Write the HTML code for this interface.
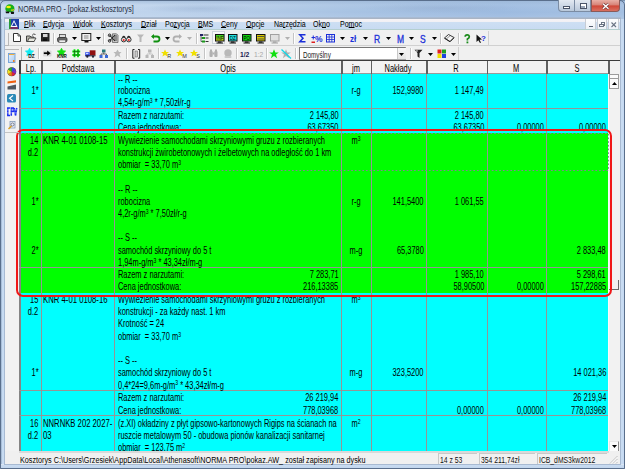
<!DOCTYPE html>
<html><head><meta charset="utf-8">
<style>
html,body{margin:0;padding:0;}
body{width:625px;height:469px;overflow:hidden;position:relative;background:#f0f0f0;font-family:"Liberation Sans", sans-serif;}
.t{position:absolute;white-space:nowrap;line-height:normal;}
div{box-sizing:border-box;}
svg{position:absolute;overflow:visible;}
sup{font-size:0.68em;vertical-align:0;position:relative;top:-0.45em;line-height:0;}
u{text-decoration:underline;text-underline-offset:0.3px;text-decoration-thickness:0.8px;}
</style></head><body>
<div style="position:absolute;left:0px;top:0px;width:625px;height:19px;background:linear-gradient(90deg,#c6d8ee 0px,#bed3ec 150px,#a8c3e3 350px,#9dbbe0 500px,#a4c0e2 625px);"></div>
<div style="position:absolute;left:0px;top:0px;width:625px;height:19px;background:linear-gradient(#5f7795 0px,rgba(160,185,215,0.6) 1.2px,rgba(255,255,255,0.08) 5px,rgba(255,255,255,0) 12px,rgba(255,255,255,0.1) 19px);"></div>
<div style="position:absolute;left:140px;top:4px;width:120px;height:9px;background:radial-gradient(ellipse at center,rgba(140,165,200,0.35),rgba(140,165,200,0) 70%);"></div>
<div style="position:absolute;left:360px;top:3px;width:160px;height:10px;background:radial-gradient(ellipse at center,rgba(140,165,200,0.35),rgba(140,165,200,0) 70%);"></div>
<div style="position:absolute;left:0px;top:19px;width:5px;height:450px;background:linear-gradient(90deg,#6d7f98 0px,#8fa4bf 1.2px,#c4d9f1 1.8px,#c9dcf2 4px,#e8eef5 4.5px);"></div>
<div style="position:absolute;left:620px;top:19px;width:5px;height:450px;background:linear-gradient(90deg,#7f8894 0px,#a8b4c4 1px,#c9dcf2 1.5px,#c6daf2 3.5px,#66707c 4.5px);"></div>
<div style="position:absolute;left:0px;top:464px;width:625px;height:5px;background:linear-gradient(#e8eef5 0px,#c9dcf2 1px,#c2d6ee 4px,#6d7f98 5px);"></div>
<div style="position:absolute;left:0px;top:0px;width:625px;height:469px;border:1px solid #5a6f8c;border-radius:5px 5px 0 0;"></div>
<div style="position:absolute;left:4px;top:17px;width:617px;height:448px;background:#f2f2f2;border:1px solid #a8bad2;"></div>
<svg style="left:5px;top:3.8px" width="10" height="10" viewBox="0 0 10 10"><path d="M0.3 4.5Q0.5 1.5 3 0.6Q5.5 -0.2 7.5 1Q9.8 2.3 9.5 5.5Q9 8 6.5 8H3Q0.3 7.5 0.3 4.5Z" fill="#18b018"/><ellipse cx="3.6" cy="3" rx="2.4" ry="1.3" fill="#f8f010"/><path d="M6 6Q8 6.5 9.3 5.5" stroke="#e0d020" stroke-width="1.1" fill="none"/><path d="M0.5 7.5H4.5L4 9.3H1Z" fill="#111"/><path d="M5.5 7.8H9.2L8.8 9.9H6.2Z" fill="#111"/></svg>
<div class="t" style="left:18.30px;top:4.06px;font-size:9px;color:#1e2b3c;transform:scaleX(0.79);transform-origin:0 0;">NORMA PRO - [pokaz.kst:kosztorys]</div>
<div style="position:absolute;left:558.4px;top:0px;width:17px;height:11.5px;background:linear-gradient(#e3e9f1,#cdd8e6 50%,#b9c8da);border:1px solid #7b8ca3;border-top:none;border-radius:0 0 0 4px;"></div>
<div style="position:absolute;left:563.3px;top:6.2px;width:7.2px;height:2.6px;background:#fff;border:0.8px solid #4a5468;"></div>
<div style="position:absolute;left:575.2px;top:0px;width:16.2px;height:11.5px;background:linear-gradient(#e3e9f1,#cdd8e6 50%,#b9c8da);border:1px solid #7b8ca3;border-top:none;border-left:none;"></div>
<div style="position:absolute;left:579.8px;top:3.4px;width:7px;height:5.8px;border:1px solid #4a5468;background:#fff;"></div>
<div style="position:absolute;left:581.3px;top:5.5px;width:4px;height:2.2px;background:#9aa6b8;"></div>
<div style="position:absolute;left:591.4px;top:0px;width:29px;height:11.5px;background:linear-gradient(#e8b0a6,#d8867a 42%,#d04838 55%,#d87060);border:1px solid #8a5a58;border-top:none;border-radius:0 0 4px 0;"></div>
<svg style="left:602.3px;top:2.8px" width="7.5" height="6.5" viewBox="0 0 7.5 6.5"><path d="M1 0.8L6.5 5.7M6.5 0.8L1 5.7" stroke="#6a3030" stroke-width="2.6"/><path d="M1 0.8L6.5 5.7M6.5 0.8L1 5.7" stroke="#fff" stroke-width="1.5"/></svg>
<div style="position:absolute;left:4px;top:17.5px;width:617px;height:1.5px;background:#a9b4c4;"></div>
<div style="position:absolute;left:5px;top:19px;width:615px;height:10px;background:linear-gradient(#f6f3f6 0px,#f0f0f5 3px,#cddff3 3.5px,#c8dbf2 10px);"></div>
<div style="position:absolute;left:5px;top:28.8px;width:615px;height:1.4px;background:#a9cccb;"></div>
<svg style="left:9px;top:19px" width="10" height="10" viewBox="0 0 10 10"><rect width="10" height="10" fill="#1c3fa8"/><rect x="0" y="0" width="2" height="10" fill="#2a9a3a"/><path d="M5 1 L8.5 8 H1.5Z" fill="#fff"/><path d="M5 3 L7 7 H3Z" fill="#1c3fa8"/><rect x="1" y="8.5" width="8" height="1" fill="#d02020"/></svg>
<div class="t" style="left:23.60px;top:19.22px;font-size:8.6px;color:#000;transform:scaleX(0.82);transform-origin:0 0;"><u>P</u>lik</div>
<div class="t" style="left:43.40px;top:19.22px;font-size:8.6px;color:#000;transform:scaleX(0.82);transform-origin:0 0;"><u>E</u>dycja</div>
<div class="t" style="left:72.50px;top:19.22px;font-size:8.6px;color:#000;transform:scaleX(0.82);transform-origin:0 0;"><u>W</u>idok</div>
<div class="t" style="left:101.00px;top:19.22px;font-size:8.6px;color:#000;transform:scaleX(0.82);transform-origin:0 0;"><u>K</u>osztorys</div>
<div class="t" style="left:141.00px;top:19.22px;font-size:8.6px;color:#000;transform:scaleX(0.82);transform-origin:0 0;"><u>D</u>ział</div>
<div class="t" style="left:165.00px;top:19.22px;font-size:8.6px;color:#000;transform:scaleX(0.82);transform-origin:0 0;">Po<u>z</u>ycja</div>
<div class="t" style="left:198.00px;top:19.22px;font-size:8.6px;color:#000;transform:scaleX(0.82);transform-origin:0 0;"><u>B</u>MS</div>
<div class="t" style="left:221.00px;top:19.22px;font-size:8.6px;color:#000;transform:scaleX(0.82);transform-origin:0 0;"><u>C</u>eny</div>
<div class="t" style="left:246.00px;top:19.22px;font-size:8.6px;color:#000;transform:scaleX(0.82);transform-origin:0 0;"><u>O</u>pcje</div>
<div class="t" style="left:274.00px;top:19.22px;font-size:8.6px;color:#000;transform:scaleX(0.82);transform-origin:0 0;">Na<u>r</u>zędzia</div>
<div class="t" style="left:312.80px;top:19.22px;font-size:8.6px;color:#000;transform:scaleX(0.82);transform-origin:0 0;">Ok<u>n</u>o</div>
<div class="t" style="left:339.70px;top:19.22px;font-size:8.6px;color:#000;transform:scaleX(0.82);transform-origin:0 0;">Po<u>m</u>oc</div>
<div style="position:absolute;left:585.4px;top:19.3px;width:10.6px;height:10px;background:linear-gradient(#fdfdfe,#eef2f8);border-left:1px solid #c8ccd4;border-right:1px solid #c8ccd4;"></div>
<div style="position:absolute;left:596.8px;top:19.3px;width:10.6px;height:10px;background:linear-gradient(#fdfdfe,#eef2f8);border-left:1px solid #c8ccd4;border-right:1px solid #c8ccd4;"></div>
<div style="position:absolute;left:608.3px;top:19.3px;width:10.5px;height:10px;background:linear-gradient(#fdfdfe,#eef2f8);border-left:1px solid #c8ccd4;border-right:1px solid #c8ccd4;"></div>
<div style="position:absolute;left:588.8px;top:26.2px;width:4px;height:1px;background:#556070;"></div>
<div style="position:absolute;left:600.5px;top:22.3px;width:4.5px;height:3.5px;border:1px solid #6a7484;border-top-width:1.5px;"></div>
<div style="position:absolute;left:599.2px;top:23.8px;width:4.5px;height:3.5px;border:1px solid #6a7484;border-top-width:1.5px;background:#f4f6fa;"></div>
<svg style="left:610.8px;top:21.8px" width="5.5" height="5.5" viewBox="0 0 5.5 5.5"><path d="M0.5 0.5L5 5M5 0.5L0.5 5" stroke="#6a7484" stroke-width="1.1"/></svg>
<div style="position:absolute;left:5px;top:30px;width:615px;height:15px;background:#f0f0f0;"></div>
<div style="position:absolute;left:5px;top:45px;width:615px;height:1px;background:#d0d0d0;"></div>
<div style="position:absolute;left:5px;top:46px;width:615px;height:14px;background:#f0f0f0;"></div>
<div style="position:absolute;left:19px;top:74px;width:589px;height:59px;background:#00ffff;"></div>
<div style="position:absolute;left:19px;top:133px;width:589px;height:159.5px;background:#00ff00;"></div>
<div style="position:absolute;left:19px;top:292.5px;width:589px;height:158.5px;background:#00ffff;"></div>
<div style="position:absolute;left:19px;top:60px;width:601px;height:14px;background:#f2f2f2;"></div>
<div style="position:absolute;left:19px;top:60px;width:601px;height:1.3px;background:#3c3c3c;"></div>
<div style="position:absolute;left:19px;top:73px;width:589px;height:1px;background:#9a9a9a;"></div>
<div style="position:absolute;left:41px;top:61px;width:1.5px;height:12.5px;background:#606060;"></div>
<div style="position:absolute;left:114px;top:61px;width:1.5px;height:12.5px;background:#606060;"></div>
<div style="position:absolute;left:341px;top:61px;width:1.5px;height:12.5px;background:#606060;"></div>
<div style="position:absolute;left:370.5px;top:61px;width:1.5px;height:12.5px;background:#606060;"></div>
<div style="position:absolute;left:426px;top:61px;width:1.5px;height:12.5px;background:#606060;"></div>
<div style="position:absolute;left:486.5px;top:61px;width:1.5px;height:12.5px;background:#606060;"></div>
<div style="position:absolute;left:546px;top:61px;width:1.5px;height:12.5px;background:#606060;"></div>
<div style="position:absolute;left:608px;top:61px;width:1.5px;height:12.5px;background:#606060;"></div>
<div style="position:absolute;left:19px;top:60px;width:1.5px;height:14px;background:#3c3c3c;"></div>
<div style="position:absolute;left:19px;top:74px;width:2px;height:377px;background:#858585;"></div>
<div style="position:absolute;left:41px;top:74px;width:1px;height:377px;background:#959595;"></div>
<div style="position:absolute;left:114px;top:74px;width:1px;height:377px;background:#959595;"></div>
<div style="position:absolute;left:341px;top:74px;width:1px;height:377px;background:#959595;"></div>
<div style="position:absolute;left:370.5px;top:74px;width:1px;height:377px;background:#959595;"></div>
<div style="position:absolute;left:426px;top:74px;width:1px;height:377px;background:#959595;"></div>
<div style="position:absolute;left:486.5px;top:74px;width:1px;height:377px;background:#959595;"></div>
<div style="position:absolute;left:546px;top:74px;width:1px;height:377px;background:#959595;"></div>
<div style="position:absolute;left:608px;top:74px;width:1.2px;height:377px;background:#fafafa;"></div>
<div style="position:absolute;left:19px;top:108px;width:589px;height:1px;background:#959595;"></div>
<div style="position:absolute;left:19px;top:267px;width:589px;height:1px;background:#959595;"></div>
<div style="position:absolute;left:19px;top:390px;width:589px;height:1px;background:#959595;"></div>
<div style="position:absolute;left:19px;top:415px;width:589px;height:1px;background:#959595;"></div>
<div class="t" style="left:-69.00px;width:200px;text-align:center;top:63.37px;font-size:10.2px;color:#000;transform:scaleX(0.73);transform-origin:50% 0;">Lp.</div>
<div class="t" style="left:-22.20px;width:200px;text-align:center;top:63.37px;font-size:10.2px;color:#000;transform:scaleX(0.73);transform-origin:50% 0;">Podstawa</div>
<div class="t" style="left:127.80px;width:200px;text-align:center;top:63.37px;font-size:10.2px;color:#000;transform:scaleX(0.73);transform-origin:50% 0;">Opis</div>
<div class="t" style="left:255.80px;width:200px;text-align:center;top:63.37px;font-size:10.2px;color:#000;transform:scaleX(0.73);transform-origin:50% 0;">jm</div>
<div class="t" style="left:298.30px;width:200px;text-align:center;top:63.37px;font-size:10.2px;color:#000;transform:scaleX(0.73);transform-origin:50% 0;">Nakłady</div>
<div class="t" style="left:356.30px;width:200px;text-align:center;top:63.37px;font-size:10.2px;color:#000;transform:scaleX(0.73);transform-origin:50% 0;">R</div>
<div class="t" style="left:416.30px;width:200px;text-align:center;top:63.37px;font-size:10.2px;color:#000;transform:scaleX(0.73);transform-origin:50% 0;">M</div>
<div class="t" style="left:477.10px;width:200px;text-align:center;top:63.37px;font-size:10.2px;color:#000;transform:scaleX(0.73);transform-origin:50% 0;">S</div>
<div class="t" style="left:117.50px;top:73.57px;font-size:10.2px;color:#000;transform:scaleX(0.73);transform-origin:0 0;">-- R --</div>
<div class="t" style="left:117.50px;top:85.37px;font-size:10.2px;color:#000;transform:scaleX(0.73);transform-origin:0 0;">robocizna</div>
<div class="t" style="left:117.50px;top:97.17px;font-size:10.2px;color:#000;transform:scaleX(0.73);transform-origin:0 0;">4,54r-g/m<sup>3</sup> * 7,50zł/r-g</div>
<div class="t" style="right:586.50px;top:85.37px;font-size:10.2px;color:#000;transform:scaleX(0.73);transform-origin:100% 0;">1*</div>
<div class="t" style="left:256.00px;width:200px;text-align:center;top:85.37px;font-size:10.2px;color:#000;transform:scaleX(0.73);transform-origin:50% 0;">r-g</div>
<div class="t" style="right:201.50px;top:85.37px;font-size:10.2px;color:#000;transform:scaleX(0.73);transform-origin:100% 0;">152,9980</div>
<div class="t" style="right:141.00px;top:85.37px;font-size:10.2px;color:#000;transform:scaleX(0.73);transform-origin:100% 0;">1 147,49</div>
<div class="t" style="left:117.50px;top:109.57px;font-size:10.2px;color:#000;transform:scaleX(0.73);transform-origin:0 0;">Razem z narzutami:</div>
<div class="t" style="left:117.50px;top:121.57px;font-size:10.2px;color:#000;transform:scaleX(0.73);transform-origin:0 0;">Cena jednostkowa:</div>
<div class="t" style="right:286.50px;top:109.57px;font-size:10.2px;color:#000;transform:scaleX(0.73);transform-origin:100% 0;">2 145,80</div>
<div class="t" style="right:286.50px;top:121.57px;font-size:10.2px;color:#000;transform:scaleX(0.73);transform-origin:100% 0;">63,67350</div>
<div class="t" style="right:141.00px;top:109.57px;font-size:10.2px;color:#000;transform:scaleX(0.73);transform-origin:100% 0;">2 145,80</div>
<div class="t" style="right:141.00px;top:121.57px;font-size:10.2px;color:#000;transform:scaleX(0.73);transform-origin:100% 0;">63,67350</div>
<div class="t" style="right:81.00px;top:121.57px;font-size:10.2px;color:#000;transform:scaleX(0.73);transform-origin:100% 0;">0,00000</div>
<div class="t" style="right:19.00px;top:121.57px;font-size:10.2px;color:#000;transform:scaleX(0.73);transform-origin:100% 0;">0,00000</div>
<div class="t" style="right:586.50px;top:134.97px;font-size:10.2px;color:#000;transform:scaleX(0.73);transform-origin:100% 0;">14</div>
<div class="t" style="right:586.50px;top:146.97px;font-size:10.2px;color:#000;transform:scaleX(0.73);transform-origin:100% 0;">d.2</div>
<div class="t" style="left:43.00px;top:134.97px;font-size:10.2px;color:#000;transform:scaleX(0.76);transform-origin:0 0;">KNR 4-01 0108-15</div>
<div class="t" style="left:117.50px;top:134.97px;font-size:10.2px;color:#000;transform:scaleX(0.73);transform-origin:0 0;">Wywiezienie samochodami skrzyniowymi gruzu z rozbieranych</div>
<div class="t" style="left:117.50px;top:146.97px;font-size:10.2px;color:#000;transform:scaleX(0.73);transform-origin:0 0;">konstrukcji żwirobetonowych i żelbetowych na odległość do 1 km</div>
<div class="t" style="left:117.50px;top:159.07px;font-size:10.2px;color:#000;transform:scaleX(0.73);transform-origin:0 0;">obmiar&nbsp; = 33,70 m<sup>3</sup></div>
<div class="t" style="left:256.00px;width:200px;text-align:center;top:134.97px;font-size:10.2px;color:#000;transform:scaleX(0.73);transform-origin:50% 0;">m<sup>3</sup></div>
<div class="t" style="left:117.50px;top:183.67px;font-size:10.2px;color:#000;transform:scaleX(0.73);transform-origin:0 0;">-- R --</div>
<div class="t" style="left:117.50px;top:195.67px;font-size:10.2px;color:#000;transform:scaleX(0.73);transform-origin:0 0;">robocizna</div>
<div class="t" style="left:117.50px;top:207.77px;font-size:10.2px;color:#000;transform:scaleX(0.73);transform-origin:0 0;">4,2r-g/m<sup>3</sup> * 7,50zł/r-g</div>
<div class="t" style="right:586.50px;top:195.67px;font-size:10.2px;color:#000;transform:scaleX(0.73);transform-origin:100% 0;">1*</div>
<div class="t" style="left:256.00px;width:200px;text-align:center;top:195.67px;font-size:10.2px;color:#000;transform:scaleX(0.73);transform-origin:50% 0;">r-g</div>
<div class="t" style="right:201.50px;top:195.67px;font-size:10.2px;color:#000;transform:scaleX(0.73);transform-origin:100% 0;">141,5400</div>
<div class="t" style="right:141.00px;top:195.67px;font-size:10.2px;color:#000;transform:scaleX(0.73);transform-origin:100% 0;">1 061,55</div>
<div class="t" style="left:117.50px;top:232.07px;font-size:10.2px;color:#000;transform:scaleX(0.73);transform-origin:0 0;">-- S --</div>
<div class="t" style="left:117.50px;top:244.57px;font-size:10.2px;color:#000;transform:scaleX(0.73);transform-origin:0 0;">samochód skrzyniowy do 5 t</div>
<div class="t" style="left:117.50px;top:256.77px;font-size:10.2px;color:#000;transform:scaleX(0.73);transform-origin:0 0;">1,94m-g/m<sup>3</sup> * 43,34zł/m-g</div>
<div class="t" style="right:586.50px;top:244.57px;font-size:10.2px;color:#000;transform:scaleX(0.73);transform-origin:100% 0;">2*</div>
<div class="t" style="left:256.00px;width:200px;text-align:center;top:244.57px;font-size:10.2px;color:#000;transform:scaleX(0.73);transform-origin:50% 0;">m-g</div>
<div class="t" style="right:201.50px;top:244.57px;font-size:10.2px;color:#000;transform:scaleX(0.73);transform-origin:100% 0;">65,3780</div>
<div class="t" style="right:19.00px;top:244.57px;font-size:10.2px;color:#000;transform:scaleX(0.73);transform-origin:100% 0;">2 833,48</div>
<div class="t" style="left:117.50px;top:268.97px;font-size:10.2px;color:#000;transform:scaleX(0.73);transform-origin:0 0;">Razem z narzutami:</div>
<div class="t" style="left:117.50px;top:280.97px;font-size:10.2px;color:#000;transform:scaleX(0.73);transform-origin:0 0;">Cena jednostkowa:</div>
<div class="t" style="right:286.50px;top:268.97px;font-size:10.2px;color:#000;transform:scaleX(0.73);transform-origin:100% 0;">7 283,71</div>
<div class="t" style="right:286.50px;top:280.97px;font-size:10.2px;color:#000;transform:scaleX(0.73);transform-origin:100% 0;">216,13385</div>
<div class="t" style="right:141.00px;top:268.97px;font-size:10.2px;color:#000;transform:scaleX(0.73);transform-origin:100% 0;">1 985,10</div>
<div class="t" style="right:141.00px;top:280.97px;font-size:10.2px;color:#000;transform:scaleX(0.73);transform-origin:100% 0;">58,90500</div>
<div class="t" style="right:81.00px;top:280.97px;font-size:10.2px;color:#000;transform:scaleX(0.73);transform-origin:100% 0;">0,00000</div>
<div class="t" style="right:19.00px;top:268.97px;font-size:10.2px;color:#000;transform:scaleX(0.73);transform-origin:100% 0;">5 298,61</div>
<div class="t" style="right:19.00px;top:280.97px;font-size:10.2px;color:#000;transform:scaleX(0.73);transform-origin:100% 0;">157,22885</div>
<div class="t" style="right:586.50px;top:294.37px;font-size:10.2px;color:#000;transform:scaleX(0.73);transform-origin:100% 0;">15</div>
<div class="t" style="right:586.50px;top:306.37px;font-size:10.2px;color:#000;transform:scaleX(0.73);transform-origin:100% 0;">d.2</div>
<div class="t" style="left:43.00px;top:294.37px;font-size:10.2px;color:#000;transform:scaleX(0.76);transform-origin:0 0;">KNR 4-01 0108-16</div>
<div class="t" style="left:117.50px;top:294.37px;font-size:10.2px;color:#000;transform:scaleX(0.73);transform-origin:0 0;">Wywiezienie samochodami skrzyniowymi gruzu z rozbieranych</div>
<div class="t" style="left:117.50px;top:306.37px;font-size:10.2px;color:#000;transform:scaleX(0.73);transform-origin:0 0;">konstrukcji - za każdy nast. 1 km</div>
<div class="t" style="left:117.50px;top:318.47px;font-size:10.2px;color:#000;transform:scaleX(0.73);transform-origin:0 0;">Krotność = 24</div>
<div class="t" style="left:117.50px;top:330.67px;font-size:10.2px;color:#000;transform:scaleX(0.73);transform-origin:0 0;">obmiar&nbsp; = 33,70 m<sup>3</sup></div>
<div class="t" style="left:256.00px;width:200px;text-align:center;top:294.37px;font-size:10.2px;color:#000;transform:scaleX(0.73);transform-origin:50% 0;">m<sup>3</sup></div>
<div class="t" style="left:117.50px;top:354.97px;font-size:10.2px;color:#000;transform:scaleX(0.73);transform-origin:0 0;">-- S --</div>
<div class="t" style="left:117.50px;top:367.27px;font-size:10.2px;color:#000;transform:scaleX(0.73);transform-origin:0 0;">samochód skrzyniowy do 5 t</div>
<div class="t" style="left:117.50px;top:379.57px;font-size:10.2px;color:#000;transform:scaleX(0.73);transform-origin:0 0;">0,4*24=9,6m-g/m<sup>3</sup> * 43,34zł/m-g</div>
<div class="t" style="right:586.50px;top:367.27px;font-size:10.2px;color:#000;transform:scaleX(0.73);transform-origin:100% 0;">1*</div>
<div class="t" style="left:256.00px;width:200px;text-align:center;top:367.27px;font-size:10.2px;color:#000;transform:scaleX(0.73);transform-origin:50% 0;">m-g</div>
<div class="t" style="right:201.50px;top:367.27px;font-size:10.2px;color:#000;transform:scaleX(0.73);transform-origin:100% 0;">323,5200</div>
<div class="t" style="right:19.00px;top:367.27px;font-size:10.2px;color:#000;transform:scaleX(0.73);transform-origin:100% 0;">14 021,36</div>
<div class="t" style="left:117.50px;top:392.17px;font-size:10.2px;color:#000;transform:scaleX(0.73);transform-origin:0 0;">Razem z narzutami:</div>
<div class="t" style="left:117.50px;top:404.57px;font-size:10.2px;color:#000;transform:scaleX(0.73);transform-origin:0 0;">Cena jednostkowa:</div>
<div class="t" style="right:286.50px;top:392.17px;font-size:10.2px;color:#000;transform:scaleX(0.73);transform-origin:100% 0;">26 219,94</div>
<div class="t" style="right:286.50px;top:404.57px;font-size:10.2px;color:#000;transform:scaleX(0.73);transform-origin:100% 0;">778,03968</div>
<div class="t" style="right:141.00px;top:404.57px;font-size:10.2px;color:#000;transform:scaleX(0.73);transform-origin:100% 0;">0,00000</div>
<div class="t" style="right:81.00px;top:404.57px;font-size:10.2px;color:#000;transform:scaleX(0.73);transform-origin:100% 0;">0,00000</div>
<div class="t" style="right:19.00px;top:392.17px;font-size:10.2px;color:#000;transform:scaleX(0.73);transform-origin:100% 0;">26 219,94</div>
<div class="t" style="right:19.00px;top:404.57px;font-size:10.2px;color:#000;transform:scaleX(0.73);transform-origin:100% 0;">778,03968</div>
<div class="t" style="right:586.50px;top:418.07px;font-size:10.2px;color:#000;transform:scaleX(0.73);transform-origin:100% 0;">16</div>
<div class="t" style="right:586.50px;top:430.07px;font-size:10.2px;color:#000;transform:scaleX(0.73);transform-origin:100% 0;">d.2</div>
<div class="t" style="left:43.00px;top:418.07px;font-size:10.2px;color:#000;transform:scaleX(0.755);transform-origin:0 0;">NNRNKB 202 2027-</div>
<div class="t" style="left:43.00px;top:430.07px;font-size:10.2px;color:#000;transform:scaleX(0.755);transform-origin:0 0;">03</div>
<div class="t" style="left:117.50px;top:418.07px;font-size:10.2px;color:#000;transform:scaleX(0.73);transform-origin:0 0;">(z.XI) okładziny z płyt gipsowo-kartonowych Rigips na ścianach na</div>
<div class="t" style="left:117.50px;top:430.07px;font-size:10.2px;color:#000;transform:scaleX(0.73);transform-origin:0 0;">ruszcie metalowym 50 - obudowa pionów kanalizacji sanitarnej</div>
<div class="t" style="left:117.50px;top:442.07px;font-size:10.2px;color:#000;transform:scaleX(0.73);transform-origin:0 0;">obmiar&nbsp; = 123,75 m<sup>2</sup></div>
<div class="t" style="left:256.00px;width:200px;text-align:center;top:418.07px;font-size:10.2px;color:#000;transform:scaleX(0.73);transform-origin:50% 0;">m<sup>2</sup></div>
<svg style="left:20px;top:133px" width="589" height="38" viewBox="0 0 589 38"><rect x="0.5" y="0.5" width="588" height="37" fill="none" stroke="#8a7e98" stroke-width="1" stroke-dasharray="1.7 2"/></svg>
<div style="position:absolute;left:609px;top:74px;width:11px;height:377px;background:#f2f2f2;"></div>
<div style="position:absolute;left:608.5px;top:74px;width:10.5px;height:14.5px;background:#fbfbfb;border:1px solid #9c9c9c;"></div>
<div style="position:absolute;left:608.5px;top:78px;width:10.5px;height:1px;background:#9c9c9c;"></div>
<svg style="left:611.5px;top:82.3px" width="5" height="3" viewBox="0 0 5 3"><path d="M0 3 L2.5 0 L5 3Z" fill="#000"/></svg>
<div style="position:absolute;left:608.5px;top:441px;width:10.5px;height:10.5px;background:#fbfbfb;border:1px solid #8c8c8c;border-top-color:#e8e8e8;border-left-color:#e8e8e8;"></div>
<div style="position:absolute;left:618px;top:280px;width:1px;height:9.5px;background:#6a6a6a;"></div>
<div style="position:absolute;left:609px;top:289px;width:10px;height:1px;background:#6a6a6a;"></div>
<div style="position:absolute;left:19px;top:451px;width:590px;height:3px;background:#e4e4e4;"></div>
<svg style="left:611.5px;top:444.5px" width="5" height="3" viewBox="0 0 5 3"><path d="M0 0 L2.5 3 L5 0Z" fill="#000"/></svg>
<div style="position:absolute;left:16.2px;top:128.9px;width:595.6px;height:168px;border:2.3px solid #f01818;border-radius:7px;"></div>
<div style="position:absolute;left:5px;top:451px;width:615px;height:13px;background:#f0f0f0;"></div>
<div style="position:absolute;left:19px;top:451px;width:590px;height:1.5px;background:#d9d9d9;"></div>
<div class="t" style="left:19.80px;top:455.11px;font-size:8.5px;color:#000;transform:scaleX(0.85);transform-origin:0 0;">Kosztorys C:\Users\Grzesiek\AppData\Local\Athenasoft\NORMA PRO\pokaz.AW_ został zapisany na dysku</div>
<div style="position:absolute;left:438px;top:453px;width:39px;height:11px;border-top:1px solid #c8c8c8;border-left:1px solid #c8c8c8;"></div>
<div class="t" style="left:440.00px;top:455.11px;font-size:8.5px;color:#111;transform:scaleX(0.8);transform-origin:0 0;">14 z 53</div>
<div style="position:absolute;left:479px;top:453px;width:56px;height:11px;border-top:1px solid #c8c8c8;border-left:1px solid #c8c8c8;"></div>
<div class="t" style="left:481.00px;top:455.11px;font-size:8.5px;color:#111;transform:scaleX(0.8);transform-origin:0 0;">354 211,74zł</div>
<div style="position:absolute;left:537px;top:453px;width:70px;height:11px;border-top:1px solid #c8c8c8;border-left:1px solid #c8c8c8;"></div>
<div class="t" style="left:539.00px;top:455.11px;font-size:8.5px;color:#111;transform:scaleX(0.8);transform-origin:0 0;">ICB_dMS3kw2012</div>
<svg style="left:609px;top:455px" width="9" height="9" viewBox="0 0 9 9"><path d="M8.5 1L1 8.5M8.5 4L4 8.5M8.5 7L7 8.5" stroke="#b8b8b8" stroke-width="0.9"/><path d="M8.5 2L2 8.5M8.5 5L5 8.5" stroke="#fff" stroke-width="0.6"/></svg>
<div style="position:absolute;left:5px;top:29px;width:615px;height:1.2px;background:#b4cfcf;"></div>
<div style="position:absolute;left:8px;top:32.5px;width:1px;height:12.5px;background:#b8b8b8;"></div>
<div style="position:absolute;left:5px;top:44.5px;width:3.5px;height:0.8px;background:#b8b8b8;"></div>
<svg style="left:13px;top:33.4px" width="8" height="9" viewBox="0 0 8 9"><path d="M0.5 0.5H5L7.5 3V8.5H0.5Z" fill="#fff" stroke="#333" stroke-width="1"/><path d="M5 0.5V3H7.5" fill="none" stroke="#333" stroke-width="0.8"/></svg>
<svg style="left:25.8px;top:33px" width="10.5" height="9" viewBox="0 0 10.5 9"><path d="M0.5 3H4L5 4H8V8.5H0.5Z" fill="#b8b8b0" stroke="#333" stroke-width="0.9"/><path d="M1.5 8.5L3 5H10L8 8.5Z" fill="#e8e8e0" stroke="#333" stroke-width="0.8"/><path d="M6 2.5Q7.5 0 9.5 1.5" fill="none" stroke="#333" stroke-width="0.9"/></svg>
<svg style="left:41px;top:33.4px" width="8.5" height="8.5" viewBox="0 0 8.5 8.5"><rect x="0.5" y="0.5" width="7.5" height="7.5" fill="#2a2a2a" stroke="#222"/><rect x="2" y="1" width="4.5" height="3" fill="#d8d8d8"/><rect x="2" y="5.5" width="4" height="2.5" fill="#111"/></svg>
<div style="position:absolute;left:53.4px;top:32.5px;width:1px;height:11.5px;background:#c4c4c4;"></div>
<div style="position:absolute;left:54.4px;top:32.5px;width:1px;height:11.5px;background:#ffffff;"></div>
<svg style="left:57px;top:33.5px" width="10.5" height="9" viewBox="0 0 10.5 9"><rect x="2.5" y="0.5" width="6" height="3" fill="#ddd" stroke="#444" stroke-width="0.8"/><rect x="0.5" y="3.5" width="9.5" height="4.5" rx="1.5" fill="#666" stroke="#333" stroke-width="0.8"/><rect x="2" y="6" width="6.5" height="2.5" fill="#eee" stroke="#555" stroke-width="0.6"/></svg>
<svg style="left:72px;top:37px" width="5" height="3" viewBox="0 0 5 3"><path d="M0 0H5L2.5 3Z" fill="#000"/></svg>
<svg style="left:81px;top:33.4px" width="11" height="10" viewBox="0 0 11 10"><rect x="0.8" y="0.5" width="9" height="7" fill="#eee" stroke="#222" stroke-width="1"/><rect x="3" y="2" width="4.5" height="4" fill="#bbb"/><rect x="3.5" y="8" width="4" height="1.5" fill="#111"/></svg>
<svg style="left:95.5px;top:37px" width="5" height="3" viewBox="0 0 5 3"><path d="M0 0H5L2.5 3Z" fill="#000"/></svg>
<div style="position:absolute;left:102.6px;top:32.5px;width:1px;height:11.5px;background:#c4c4c4;"></div>
<div style="position:absolute;left:103.6px;top:32.5px;width:1px;height:11.5px;background:#ffffff;"></div>
<svg style="left:107.5px;top:33px" width="11" height="10.5" viewBox="0 0 11 10.5"><path d="M4.5 0.8H8.5L10 2.3V9.5H4.5Z" fill="#c8c8c8" stroke="#555" stroke-width="0.7"/><path d="M6 3H9M6 5H9M6 7H9" stroke="#333" stroke-width="0.8"/><path d="M1.5 2L7 8M7 2L1.5 8" stroke="#222" stroke-width="1.1"/><circle cx="1.6" cy="2.3" r="1.3" fill="none" stroke="#222" stroke-width="1"/><circle cx="1.6" cy="7.8" r="1.3" fill="none" stroke="#222" stroke-width="1"/></svg>
<svg style="left:121px;top:34.5px" width="10.5" height="7.5" viewBox="0 0 10.5 7.5"><path d="M0.8 3.5Q1 0.5 3 0.8Q4.5 1 4.6 3.5M5.9 3.5Q6 0.5 7.8 0.8Q9.6 1 9.7 3.5" fill="#222"/><circle cx="2.7" cy="4.6" r="2.3" fill="#e8e8e8" stroke="#222" stroke-width="0.9"/><circle cx="7.8" cy="4.6" r="2.3" fill="#e8e8e8" stroke="#222" stroke-width="0.9"/><circle cx="2.7" cy="5" r="1" fill="#f02020"/><circle cx="7.8" cy="5" r="1" fill="#f02020"/></svg>
<svg style="left:137px;top:34px" width="7" height="8" viewBox="0 0 7 8"><path d="M0 0.5H7L4.5 3.5V8H2.5V3.5Z" fill="#b8b8b8"/></svg>
<svg style="left:150.7px;top:34px" width="9" height="8" viewBox="0 0 9 8"><path d="M1.5 2.5H6Q8.5 2.5 8.5 5Q8.5 7.5 6 7.5H2.5" fill="none" stroke="#109010" stroke-width="1.8"/><path d="M0 2.5L3 0V5Z" fill="#109010"/></svg>
<svg style="left:164.5px;top:37px" width="5" height="3" viewBox="0 0 5 3"><path d="M0 0H5L2.5 3Z" fill="#000"/></svg>
<svg style="left:172.8px;top:34px" width="9" height="8" viewBox="0 0 9 8"><path d="M7.5 2.5H3Q0.5 2.5 0.5 5Q0.5 7.5 3 7.5H6.5" fill="none" stroke="#b0b0b0" stroke-width="1.8"/><path d="M9 2.5L6 0V5Z" fill="#b0b0b0"/></svg>
<svg style="left:186.5px;top:37px" width="5" height="3" viewBox="0 0 5 3"><path d="M0 0H5L2.5 3Z" fill="#b0b0b0"/></svg>
<div style="position:absolute;left:195.8px;top:32.5px;width:1px;height:11.5px;background:#c4c4c4;"></div>
<div style="position:absolute;left:196.8px;top:32.5px;width:1px;height:11.5px;background:#ffffff;"></div>
<svg style="left:200.3px;top:33.5px" width="8.5" height="9" viewBox="0 0 8.5 9"><rect x="0" y="0" width="3" height="2" fill="#226"/><rect x="3.5" y="0.5" width="5" height="1" fill="#333"/><rect x="2" y="3" width="3" height="2" fill="#1a9a1a"/><rect x="5.5" y="3.5" width="3" height="1" fill="#333"/><rect x="2" y="6.5" width="3" height="2" fill="#1a9a1a"/><rect x="5.5" y="7" width="3" height="1" fill="#333"/><path d="M1 2V7.5H2M1 4H2" stroke="#333" stroke-width="0.7" fill="none"/></svg>
<div style="position:absolute;left:211.7px;top:31.3px;width:13px;height:13px;background:#f7f7f7;border:1px solid #cdd3da;"></div>
<svg style="left:214.5px;top:34px" width="9.5" height="9.5" viewBox="0 0 9.5 9.5"><defs><linearGradient id="g1" x1="0" y1="0" x2="0" y2="1"><stop offset="0" stop-color="#20d020"/><stop offset="1" stop-color="#e0e020"/></linearGradient></defs><rect x="0.5" y="0.5" width="8.5" height="6.5" fill="url(#g1)" stroke="#111"/><rect x="3" y="7.5" width="3.5" height="1.2" fill="#111"/><rect x="1.5" y="8.5" width="6.5" height="1" fill="#111"/><text x="4.75" y="5.6" font-size="4.5" text-anchor="middle" fill="#000" font-family="Liberation Sans">INF</text></svg>
<svg style="left:228px;top:34px" width="9.5" height="9.5" viewBox="0 0 9.5 9.5"><rect x="0.5" y="0.5" width="8.5" height="6.5" fill="#20e0e0" stroke="#111" stroke-width="1"/><rect x="3" y="7.5" width="3.5" height="1.2" fill="#111"/><rect x="1.5" y="8.5" width="6.5" height="1" fill="#111"/><text x="4.75" y="5.6" font-size="4.5" text-anchor="middle" fill="#000" font-family="Liberation Sans">DZ</text></svg>
<svg style="left:242px;top:34px" width="9.5" height="9.5" viewBox="0 0 9.5 9.5"><rect x="0.5" y="0.5" width="8.5" height="6.5" fill="#10d010" stroke="#111" stroke-width="1"/><rect x="3" y="7.5" width="3.5" height="1.2" fill="#111"/><rect x="1.5" y="8.5" width="6.5" height="1" fill="#111"/><text x="4.75" y="5.6" font-size="4.5" text-anchor="middle" fill="#000" font-family="Liberation Sans">PO</text></svg>
<svg style="left:255.8px;top:34px" width="9.5" height="9.5" viewBox="0 0 9.5 9.5"><rect x="0.5" y="0.5" width="8.5" height="6.5" fill="#d8c800" stroke="#111"/><rect x="1.5" y="2" width="6.5" height="1" fill="#554"/><rect x="1.5" y="4.5" width="6.5" height="1" fill="#554"/><rect x="3" y="7.5" width="3.5" height="1.2" fill="#111"/><rect x="1.5" y="8.5" width="6.5" height="1" fill="#111"/></svg>
<svg style="left:269.5px;top:34px" width="9.5" height="9.5" viewBox="0 0 9.5 9.5"><rect x="0.5" y="0.5" width="8.5" height="6.5" fill="#e0e0e0" stroke="#a0a0a0" stroke-width="1"/><rect x="3" y="7.5" width="3.5" height="1.2" fill="#a0a0a0"/><rect x="1.5" y="8.5" width="6.5" height="1" fill="#a0a0a0"/></svg>
<svg style="left:284.5px;top:37px" width="5" height="3" viewBox="0 0 5 3"><path d="M0 0H5L2.5 3Z" fill="#b0b0b0"/></svg>
<div style="position:absolute;left:292.5px;top:32.5px;width:1px;height:11.5px;background:#c4c4c4;"></div>
<div style="position:absolute;left:293.5px;top:32.5px;width:1px;height:11.5px;background:#ffffff;"></div>
<svg style="left:298.6px;top:34px" width="7" height="8.5" viewBox="0 0 7 8.5"><path d="M6.5 0.8H0.8L4 4.2L0.8 7.7H6.5" fill="none" stroke="#1a2fd8" stroke-width="1.5"/></svg>
<svg style="left:311px;top:33.5px" width="10" height="9.5" viewBox="0 0 10 9.5"><path d="M0.5 3.5H4M2.25 1.5V5.5" stroke="#1a2fd8" stroke-width="1"/><rect x="0.5" y="7.5" width="3.5" height="1.5" fill="#e02020"/><text x="4" y="8" font-size="8.5" fill="#1a2fd8" font-family="Liberation Sans" font-weight="bold">%</text></svg>
<svg style="left:325.5px;top:34px" width="9" height="8.5" viewBox="0 0 9 8.5"><rect x="0.5" y="0.5" width="8" height="7.5" fill="none" stroke="#1a2fd8" stroke-width="1"/><path d="M0.5 3H8.5M0.5 5.5H8.5M3.2 0.5V8M5.8 0.5V8" stroke="#1a2fd8" stroke-width="0.8"/></svg>
<svg style="left:339.5px;top:37px" width="5" height="3" viewBox="0 0 5 3"><path d="M0 0H5L2.5 3Z" fill="#000"/></svg>
<svg style="left:349.5px;top:33.5px" width="8" height="9" viewBox="0 0 8 9"><text x="0" y="8.5" font-size="9" fill="#1a2fd8" font-family="Liberation Sans" font-weight="bold" transform="scale(0.9,1)">zł</text></svg>
<svg style="left:362.5px;top:37px" width="5" height="3" viewBox="0 0 5 3"><path d="M0 0H5L2.5 3Z" fill="#000"/></svg>
<svg style="left:373.5px;top:33.5px" width="7" height="9" viewBox="0 0 7 9"><text x="0" y="8.5" font-size="10" fill="#1a2fd8" font-family="Liberation Sans" stroke="#1a2fd8" stroke-width="0.3" transform="scale(0.85,1)">R</text></svg>
<svg style="left:385.5px;top:37px" width="5" height="3" viewBox="0 0 5 3"><path d="M0 0H5L2.5 3Z" fill="#000"/></svg>
<svg style="left:396.6px;top:33.5px" width="8" height="9" viewBox="0 0 8 9"><text x="0" y="8.5" font-size="10" fill="#1a2fd8" font-family="Liberation Sans" stroke="#1a2fd8" stroke-width="0.3" transform="scale(0.85,1)">M</text></svg>
<svg style="left:409px;top:37px" width="5" height="3" viewBox="0 0 5 3"><path d="M0 0H5L2.5 3Z" fill="#000"/></svg>
<svg style="left:420px;top:33.5px" width="7" height="9" viewBox="0 0 7 9"><text x="0" y="8.5" font-size="10" fill="#1a2fd8" font-family="Liberation Sans" stroke="#1a2fd8" stroke-width="0.3" transform="scale(0.85,1)">S</text></svg>
<svg style="left:432px;top:37px" width="5" height="3" viewBox="0 0 5 3"><path d="M0 0H5L2.5 3Z" fill="#000"/></svg>
<div style="position:absolute;left:440px;top:32.5px;width:1px;height:11.5px;background:#c4c4c4;"></div>
<div style="position:absolute;left:441px;top:32.5px;width:1px;height:11.5px;background:#ffffff;"></div>
<svg style="left:444px;top:34px" width="10.5" height="8" viewBox="0 0 10.5 8"><path d="M0.5 4L4.5 0.5L10 3.5L6 7.5Z" fill="#f4f4f4" stroke="#222" stroke-width="0.9"/><path d="M2 5.2L6 1.8" stroke="#555" stroke-width="0.6"/><path d="M0.5 4.3L6 7.8L10 3.8" fill="none" stroke="#222" stroke-width="0.9"/></svg>
<div style="position:absolute;left:458px;top:32.5px;width:1px;height:11.5px;background:#c4c4c4;"></div>
<div style="position:absolute;left:459px;top:32.5px;width:1px;height:11.5px;background:#ffffff;"></div>
<svg style="left:464px;top:33.5px" width="6.5" height="9.5" viewBox="0 0 6.5 9.5"><path d="M1.2 2.8Q1.2 0.8 3.2 0.8Q5.3 0.8 5.3 2.8Q5.3 4.2 3.4 5V6.5" fill="none" stroke="#1a8a1a" stroke-width="1.7"/><rect x="2.5" y="7.5" width="1.8" height="1.8" fill="#1a8a1a"/></svg>
<svg style="left:475.6px;top:33.5px" width="10" height="9.5" viewBox="0 0 10 9.5"><path d="M0.5 0.5L0.5 8L2.3 6.3L4 9L5 8.5L3.5 5.8L6 5.6Z" fill="#111"/><text x="5" y="7" font-size="8" fill="#1a2fd8" font-family="Liberation Sans" font-weight="bold">?</text></svg>
<div style="position:absolute;left:488px;top:31px;width:1px;height:14.5px;background:#d0d0d0;"></div>
<svg style="left:24.8px;top:48px" width="10" height="10.5" viewBox="0 0 10 10.5"><path d="M4.5 0.3L5.8 2.8L8.6 3.1L6.5 5L7.2 7.6L4.5 6.3L1.8 7.6L2.5 5L0.4 3.1L3.2 2.8Z" fill="#10e8f0" stroke="#10e8f0" stroke-width="0.8" stroke-linejoin="round"/><text x="3.2" y="10.2" font-size="4.8" fill="#111" font-family="Liberation Sans" font-weight="bold">DZ</text></svg>
<div style="position:absolute;left:38.4px;top:48px;width:1px;height:11px;background:#c4c4c4;"></div>
<div style="position:absolute;left:39.4px;top:48px;width:1px;height:11px;background:#ffffff;"></div>
<svg style="left:43px;top:50px" width="8.5" height="6.5" viewBox="0 0 8.5 6.5"><rect x="0" y="0.5" width="8.5" height="6" rx="1" fill="#d8d8d8"/><path d="M0.8 3.2H5" stroke="#000" stroke-width="1.7"/><path d="M4.2 0.6L7.6 3.2L4.2 5.8Z" fill="#000"/></svg>
<svg style="left:56.8px;top:48px" width="9.5" height="10.5" viewBox="0 0 9.5 10.5"><path d="M4.5 0.3L5.8 2.8L8.6 3.1L6.5 5L7.2 7.6L4.5 6.3L1.8 7.6L2.5 5L0.4 3.1L3.2 2.8Z" fill="#10e010" stroke="#10e010" stroke-width="0.8" stroke-linejoin="round"/><text x="0" y="10.3" font-size="4.8" fill="#111" font-family="Liberation Sans" font-weight="bold" transform="scale(0.95,1)">KNR</text></svg>
<svg style="left:72px;top:48.8px" width="8.5" height="8.5" viewBox="0 0 8.5 8.5"><path d="M2.5 0.3V8.2M6 0.3V8.2M0.3 2.5H8.2M0.3 6H8.2" stroke="#10f010" stroke-width="1.9"/><path d="M2.5 1V7.5M6 1V7.5M1 2.5H7.5M1 6H7.5" stroke="#205020" stroke-width="0.6"/></svg>
<svg style="left:84.8px;top:49.5px" width="10.5" height="8" viewBox="0 0 10.5 8"><rect x="4.7" y="0.3" width="5.8" height="5" fill="#901010"/><path d="M0.3 2.2H4.7V6.3H0.3Z" fill="#1838e8"/><rect x="1" y="2.8" width="2.5" height="1.5" fill="#c8d8ff"/><rect x="0.3" y="5.3" width="10.2" height="1" fill="#223"/><circle cx="2.3" cy="6.7" r="1.1" fill="#223"/><circle cx="8" cy="6.7" r="1.1" fill="#223"/></svg>
<svg style="left:98.8px;top:48.5px" width="9.5" height="9.5" viewBox="0 0 9.5 9.5"><rect x="3" y="0.5" width="3.5" height="3" fill="#287878"/><path d="M4.75 3.5V5M2 6V5H7.5V6" fill="none" stroke="#444" stroke-width="0.8"/><rect x="0.5" y="6" width="3" height="3" fill="#3a6ad8"/><rect x="6" y="6" width="3" height="3" fill="#3a6ad8"/></svg>
<svg style="left:113px;top:48.5px" width="9" height="9.5" viewBox="0 0 9 9.5"><path d="M4.5 0.5L6 3H8.5L6.5 5L7.5 8.5L4.5 6.5L1.5 8.5L2.5 5L0.5 3H3Z" fill="#b8b8b8"/></svg>
<div style="position:absolute;left:126.3px;top:48px;width:1px;height:11px;background:#c4c4c4;"></div>
<div style="position:absolute;left:127.3px;top:48px;width:1px;height:11px;background:#ffffff;"></div>
<svg style="left:131.5px;top:48.5px" width="8.5" height="10" viewBox="0 0 8.5 10"><path d="M2.5 0.5H0.8V9.2H2.5M6 0.5H7.7V9.2H6" fill="none" stroke="#222" stroke-width="1"/><rect x="3" y="2" width="2.5" height="6" fill="#ccc" stroke="#555" stroke-width="0.5"/></svg>
<svg style="left:145px;top:48.5px" width="9" height="9.5" viewBox="0 0 9 9.5"><rect x="3" y="0.5" width="3.5" height="3" fill="#b8b8b8"/><path d="M4.75 3.5V5M2 6V5H7.5V6" fill="none" stroke="#bbb" stroke-width="0.8"/><rect x="0.5" y="6" width="3" height="3" fill="#b8b8b8"/><rect x="6" y="6" width="3" height="3" fill="#b8b8b8"/></svg>
<div style="position:absolute;left:158px;top:48px;width:1px;height:11px;background:#c4c4c4;"></div>
<div style="position:absolute;left:159px;top:48px;width:1px;height:11px;background:#ffffff;"></div>
<svg style="left:161px;top:48.5px" width="11" height="10" viewBox="0 0 11 10"><path d="M4 0.5L5.2 3H8L5.8 4.8L6.6 7.5L4 6L1.4 7.5L2.2 4.8L0 3H2.8Z" fill="#f0e000"/><text x="6.3" y="9.2" font-size="5.5" fill="#333" font-family="Liberation Sans">R</text></svg>
<svg style="left:175.6px;top:48.5px" width="11" height="10" viewBox="0 0 11 10"><path d="M4 0.5L5.2 3H8L5.8 4.8L6.6 7.5L4 6L1.4 7.5L2.2 4.8L0 3H2.8Z" fill="#f0e000"/><text x="6.3" y="9.2" font-size="5.5" fill="#333" font-family="Liberation Sans">M</text></svg>
<svg style="left:190px;top:48.5px" width="11" height="10" viewBox="0 0 11 10"><path d="M4 0.5L5.2 3H8L5.8 4.8L6.6 7.5L4 6L1.4 7.5L2.2 4.8L0 3H2.8Z" fill="#f0e000"/><text x="6.3" y="9.2" font-size="5.5" fill="#333" font-family="Liberation Sans">S</text></svg>
<div style="position:absolute;left:204.4px;top:48px;width:1px;height:11px;background:#c4c4c4;"></div>
<div style="position:absolute;left:205.4px;top:48px;width:1px;height:11px;background:#ffffff;"></div>
<svg style="left:209.4px;top:48.5px" width="9" height="9.5" viewBox="0 0 9 9.5"><rect x="0.5" y="2" width="3.2" height="6" rx="1" fill="#b0b0b0"/><rect x="5.3" y="2" width="3.2" height="6" rx="1" fill="#b0b0b0"/><rect x="1" y="0.5" width="2" height="2" fill="#b0b0b0"/><rect x="6" y="0.5" width="2" height="2" fill="#b0b0b0"/><rect x="3.5" y="3.5" width="2" height="2" fill="#b0b0b0"/></svg>
<svg style="left:222.8px;top:48.5px" width="10" height="9.5" viewBox="0 0 10 9.5"><circle cx="5" cy="4" r="3.7" fill="#b8b8b8"/><rect x="1.5" y="7" width="7" height="2" rx="1" fill="#c8c8c8"/></svg>
<div style="position:absolute;left:236.3px;top:48px;width:1px;height:11px;background:#c4c4c4;"></div>
<div style="position:absolute;left:237.3px;top:48px;width:1px;height:11px;background:#ffffff;"></div>
<svg style="left:240px;top:49.5px" width="10" height="8" viewBox="0 0 10 8"><text x="0" y="7" font-size="7.5" fill="#1a1a50" font-family="Liberation Sans" font-weight="bold" transform="scale(0.9,1)">1/2</text></svg>
<svg style="left:253.6px;top:49.5px" width="10" height="8" viewBox="0 0 10 8"><text x="0" y="7" font-size="7.5" fill="#a8a8a8" font-family="Liberation Sans" transform="scale(0.9,1)">1:2</text></svg>
<div style="position:absolute;left:266px;top:48px;width:1px;height:11px;background:#c4c4c4;"></div>
<div style="position:absolute;left:267px;top:48px;width:1px;height:11px;background:#ffffff;"></div>
<svg style="left:269px;top:48.5px" width="10" height="9.5" viewBox="0 0 10 9.5"><path d="M5 0.3L6.3 3.5H9.8L7 5.6L8.1 9.2L5 7L1.9 9.2L3 5.6L0.2 3.5H3.7Z" fill="#10e010"/></svg>
<svg style="left:281.4px;top:48.5px" width="11" height="10" viewBox="0 0 11 10"><path d="M5 0.3L6.3 3.5H9.8L7 5.6L8.1 9.2L5 7L1.9 9.2L3 5.6L0.2 3.5H3.7Z" fill="#b0b0b0"/><path d="M0.5 0.5L10 9.5" stroke="#10d8e8" stroke-width="1.3"/></svg>
<div style="position:absolute;left:294.8px;top:48px;width:1px;height:11px;background:#c4c4c4;"></div>
<div style="position:absolute;left:295.8px;top:48px;width:1px;height:11px;background:#ffffff;"></div>
<div style="position:absolute;left:298.6px;top:47.2px;width:107.6px;height:12.5px;background:#fff;border:1px solid #a8a8a8;border-top-color:#777;border-left-color:#777;"></div>
<div class="t" style="left:302.50px;top:49.64px;font-size:8.8px;color:#222;transform:scaleX(0.72);transform-origin:0 0;">Domyślny</div>
<div style="position:absolute;left:397px;top:48.3px;width:8.5px;height:10.5px;background:linear-gradient(#f8f8f8,#e4e4e4);border-left:1px solid #c8c8c8;"></div>
<svg style="left:399px;top:53px" width="5" height="3" viewBox="0 0 5 3"><path d="M0 0H5L2.5 3Z" fill="#000"/></svg>
<div style="position:absolute;left:410px;top:48px;width:1px;height:11px;background:#c4c4c4;"></div>
<div style="position:absolute;left:411px;top:48px;width:1px;height:11px;background:#ffffff;"></div>
<svg style="left:414px;top:48.5px" width="9" height="9.5" viewBox="0 0 9 9.5"><path d="M0.5 0.8H8.5L5.5 4V9L3.5 7.5V4Z" fill="#222"/><path d="M1.5 1.5H4L3 3Z" fill="#fff"/></svg>
<svg style="left:427.6px;top:52.5px" width="5" height="3" viewBox="0 0 5 3"><path d="M0 0H5L2.5 3Z" fill="#000"/></svg>
<svg style="left:437px;top:48.5px" width="9.5" height="9.5" viewBox="0 0 9.5 9.5"><rect x="0.5" y="0.5" width="4" height="4" fill="#e02020"/><rect x="5" y="0.5" width="4" height="4" fill="#20a020"/><rect x="0.5" y="5" width="4" height="4" fill="#f0e000"/><rect x="5" y="5" width="4" height="4" fill="#2040e0"/></svg>
<svg style="left:450.5px;top:52.5px" width="5" height="3" viewBox="0 0 5 3"><path d="M0 0H5L2.5 3Z" fill="#000"/></svg>
<div style="position:absolute;left:458px;top:47px;width:1px;height:13px;background:#d0d0d0;"></div>
<div style="position:absolute;left:5px;top:49px;width:14px;height:1px;background:#b8b8b8;"></div>
<svg style="left:8px;top:53px" width="7.5" height="10" viewBox="0 0 7.5 10"><defs><linearGradient id="dg" x1="0" y1="0" x2="1" y2="1"><stop offset="0" stop-color="#eaf3fc"/><stop offset="1" stop-color="#a8c8ec"/></linearGradient></defs><rect x="0.5" y="0.5" width="6.5" height="9" fill="url(#dg)" stroke="#6f9fd8" stroke-width="0.9"/><rect x="1" y="1" width="5.5" height="1" fill="#f0b040"/><rect x="5" y="7" width="1.5" height="2" fill="#f08020"/></svg>
<svg style="left:7px;top:66.8px" width="9.5" height="9.5" viewBox="0 0 9.5 9.5"><circle cx="4.75" cy="4.75" r="4.5" fill="#444"/><path d="M4.75 4.75L4.75 0.5A4.25 4.25 0 0 1 8.43 2.6Z" fill="#3050e0"/><path d="M4.75 4.75L8.43 2.6A4.25 4.25 0 0 1 8.43 6.9Z" fill="#8030c0"/><path d="M4.75 4.75L8.43 6.9A4.25 4.25 0 0 1 4.75 9Z" fill="#e02040"/><path d="M4.75 4.75L4.75 9A4.25 4.25 0 0 1 1.07 6.9Z" fill="#f08010"/><path d="M4.75 4.75L1.07 6.9A4.25 4.25 0 0 1 1.07 2.6Z" fill="#f0e020"/><path d="M4.75 4.75L1.07 2.6A4.25 4.25 0 0 1 4.75 0.5Z" fill="#30b030"/></svg>
<svg style="left:6.9px;top:79.6px" width="9.5" height="10" viewBox="0 0 9.5 10"><path d="M0.5 1.5L9 0.3V2.5L0.5 3.5Z" fill="#f06010"/><path d="M0.5 6.5L9 4.5V9.5H0.5Z" fill="#505860"/></svg>
<svg style="left:7.2px;top:94.3px" width="9" height="8.5" viewBox="0 0 9 8.5"><rect x="0" y="0" width="9" height="8.5" rx="1.5" fill="#2a8ab8"/><path d="M6 1.5L2.5 4.25L6 7" fill="none" stroke="#fff" stroke-width="1.1"/></svg>
<svg style="left:6.9px;top:107px" width="10.5" height="9.5" viewBox="0 0 10.5 9.5"><g fill="none" stroke="#1a30f0" stroke-width="1.5"><path d="M3 1H0.8V8.5H3"/><path d="M4.3 8.8V1H6.3V4.5H4.3"/><path d="M7.3 1L8.5 8.5L9.8 1"/></g><g fill="#fff" opacity="0.55"><rect x="0" y="2.5" width="11" height="0.8"/><rect x="0" y="5.5" width="11" height="0.8"/></g></svg>
<svg style="left:8px;top:120.9px" width="7.5" height="8.5" viewBox="0 0 7.5 8.5"><rect x="2" y="0.5" width="5" height="6.5" fill="#e8f0fa" stroke="#7a90b0" stroke-width="0.7"/><circle cx="4.5" cy="3.5" r="1.6" fill="none" stroke="#556" stroke-width="0.7"/><path d="M3.5 5L0.5 8" stroke="#d8a020" stroke-width="1.4"/></svg>
<div style="position:absolute;left:21px;top:47px;width:1px;height:12.5px;background:#b0b0b0;"></div>
<div style="position:absolute;left:5px;top:132px;width:14px;height:1px;background:#c4c4c4;"></div>
</body></html>
